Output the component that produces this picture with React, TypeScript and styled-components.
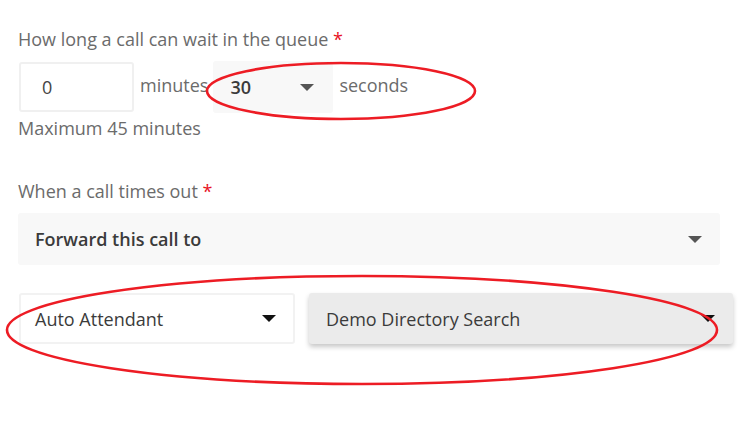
import styled, { createGlobalStyle } from "styled-components";

const Global = createGlobalStyle`
  body {
    margin: 0;
    background: #ffffff;
    font-family: "Open Sans", "Noto Sans", sans-serif;
  }
`;

const Page = styled.div`
  position: relative;
  width: 739px;
  height: 432px;
  padding: 27px 0 0 18px;
  box-sizing: border-box;
`;

const Label = styled.div<{ $top?: number }>`
  font-size: 18px;
  color: #6b6b6b;
  line-height: 24px;
  margin-top: ${({ $top }) => $top ?? 0}px;
  span {
    color: #e81123;
  }
`;

const Row = styled.div<{ $top: number }>`
  display: flex;
  align-items: center;
  margin-top: ${({ $top }) => $top}px;
`;

const NumberBox = styled.div`
  width: 115px;
  height: 50px;
  margin-left: 1px;
  box-sizing: border-box;
  border: 2px solid #f0f0f0;
  border-radius: 3px;
  display: flex;
  align-items: center;
  padding-left: 21px;
  font-size: 18px;
  color: #444;
`;

const UnitText = styled.div`
  font-size: 18px;
  color: #6b6b6b;
  margin: 0 5px 4px 6px;
`;

const Hint = styled.div`
  font-size: 18px;
  line-height: 24px;
  color: #6b6b6b;
  margin-top: 3px;
`;

const Select = styled.div<{
  $width: number;
  $height: number;
  $bg: string;
  $shadow?: boolean;
  $border?: boolean;
  $bold?: boolean;
  $caret: string;
  $padRight: number;
}>`
  width: ${({ $width }) => $width}px;
  height: ${({ $height }) => $height}px;
  box-sizing: border-box;
  background: ${({ $bg }) => $bg};
  border: ${({ $border }) => ($border ? "2px solid #f2f2f2" : "none")};
  border-radius: 3px;
  box-shadow: ${({ $shadow }) =>
    $shadow ? "0 3px 5px rgba(0, 0, 0, 0.22)" : "none"};
  display: flex;
  align-items: center;
  justify-content: space-between;
  padding: 0 ${({ $padRight }) => $padRight}px 0
    ${({ $border }) => ($border ? 14 : 17)}px;
  font-size: 18px;
  font-weight: ${({ $bold }) => ($bold ? 600 : 500)};
  color: #3b3b3b;
  .caret {
    width: 0;
    height: 0;
    border-left: 7px solid transparent;
    border-right: 7px solid transparent;
    border-top: 7px solid ${({ $caret }) => $caret};
  }
`;

const Gap = styled.div<{ $w: number }>`
  width: ${({ $w }) => $w}px;
`;

const Marks = styled.svg`
  position: absolute;
  left: 0;
  top: 0;
  pointer-events: none;
`;

export default function App() {
  return (
    <>
      <Global />
      <Page>
        <Label>
          How long a call can wait in the queue <span>*</span>
        </Label>
        <Row $top={10}>
          <NumberBox>0</NumberBox>
          <UnitText>minutes</UnitText>
          <Select $width={120} $height={52} $bg="#f8f8f8" $bold $caret="#555" $padRight={19}>
            30
            <i className="caret" />
          </Select>
          <UnitText>seconds</UnitText>
        </Row>
        <Hint>Maximum 45 minutes</Hint>
        <Label $top={39}>
          When a call times out <span>*</span>
        </Label>
        <Row $top={10}>
          <Select $width={702} $height={52} $bg="#f8f8f8" $bold $caret="#555" $padRight={18}>
            Forward this call to
            <i className="caret" />
          </Select>
        </Row>
        <Row $top={28}>
          <Gap $w={1} />
          <Select $width={276} $height={51} $bg="#ffffff" $border $caret="#111" $padRight={17}>
            Auto Attendant
            <i className="caret" />
          </Select>
          <Gap $w={14} />
          <Select $width={424} $height={51} $bg="#ebebeb" $shadow $caret="#111" $padRight={18}>
            Demo Directory Search
            <i className="caret" />
          </Select>
        </Row>
        <Marks width="739" height="432" viewBox="0 0 739 432">
          <ellipse cx="341" cy="91" rx="134" ry="28" fill="none" stroke="#ed1c24" strokeWidth="2.6" />
          <ellipse cx="362" cy="330" rx="355" ry="54" fill="none" stroke="#ed1c24" strokeWidth="2.6" />
        </Marks>
      </Page>
    </>
  );
}
